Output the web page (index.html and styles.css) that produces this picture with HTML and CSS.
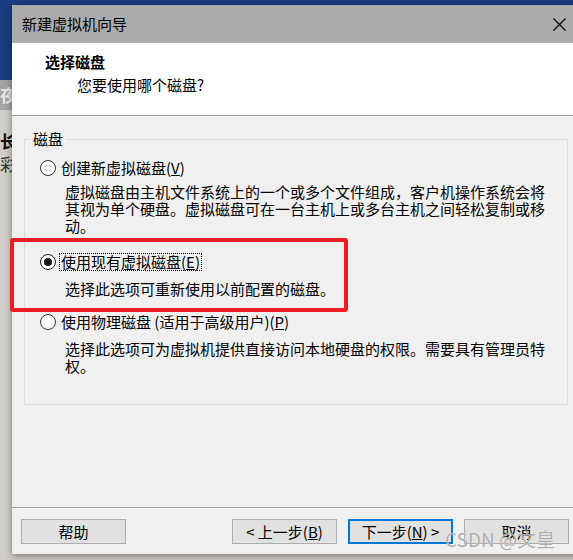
FILE: index.html
```html
<!DOCTYPE html>
<html lang="zh-CN">
<head>
<meta charset="utf-8">
<title>新建虚拟机向导</title>
<link rel="stylesheet" href="styles.css">
</head>
<body>
<div class="desktop">
  <div class="backwin">
    <div class="backwin-bar">夜</div>
    <p class="bw-strong">长</p>
    <p class="bw-text">彩</p>
  </div>
  <div class="dialog">
    <div class="titlebar">
      <span class="title">新建虚拟机向导</span>
      <svg class="close" width="13" height="13" viewBox="0 0 13 13"><path d="M0.5 0.5 L12.5 12.5 M12.5 0.5 L0.5 12.5" stroke="#000" stroke-width="1.1" fill="none"/></svg>
    </div>
    <div class="header">
      <div class="h-title">选择磁盘</div>
      <div class="h-sub">您要使用哪个磁盘?</div>
    </div>
    <div class="content">
      <fieldset class="group">
        <legend>磁盘</legend>
        <div class="option option-first">
          <div class="opt-row"><span class="radio"></span><span class="label">创建新虚拟磁盘(<u>V</u>)</span></div>
          <p class="desc desc-first">虚拟磁盘由主机文件系统上的一个或多个文件组成，客户机操作系统会将其视为单个硬盘。虚拟磁盘可在一台主机上或多台主机之间轻松复制或移动。</p>
        </div>
        <div class="option option-second">
          <div class="opt-row"><span class="radio radio-on"></span><span class="label label-focus">使用现有虚拟磁盘(<u>E</u>)</span></div>
          <p class="desc">选择此选项可重新使用以前配置的磁盘。</p>
        </div>
        <div class="option option-third">
          <div class="opt-row"><span class="radio"></span><span class="label">使用物理磁盘 (适用于高级用户)(<u>P</u>)</span></div>
          <p class="desc">选择此选项可为虚拟机提供直接访问本地硬盘的权限。需要具有管理员特权。</p>
        </div>
      </fieldset>
    </div>
    <div class="footer">
      <button class="btn">帮助</button>
      <div class="spacer"></div>
      <button class="btn">&lt; 上一步(<u>B</u>)</button>
      <button class="btn btn-default">下一步(<u>N</u>) &gt;</button>
      <button class="btn">取消</button>
    </div>
  </div>
  <div class="highlight"></div>
  <div class="watermark">CSDN @文皇</div>
</div>
</body>
</html>
```
FILE: styles.css
```css
* { box-sizing: border-box; }
html, body { margin: 0; padding: 0; }
body {
  width: 573px;
  height: 560px;
  overflow: hidden;
  background: #1b3d82;
  font-family: "Noto Sans CJK SC", "Microsoft YaHei", sans-serif;
  font-size: 15px;
  line-height: 18px;
  color: #000;
}
.desktop {
  position: relative;
  width: 573px;
  height: 560px;
  padding: 5px 0 0 12px;
  overflow: hidden;
}
.backwin {
  position: absolute;
  left: 0;
  top: 80px;
  width: 573px;
  height: 480px;
  background: #d2cec9;
}
.backwin-bar {
  height: 30px;
  background: #a4a4a4;
  color: #e8e8e8;
  font-weight: 700;
  font-size: 17px;
  line-height: 30px;
}
.backwin p { margin: 0; font-size: 17px; }
.bw-strong { margin-top: 21px !important; font-weight: 700; line-height: 20px; color: #111; }
.bw-text { line-height: 26px; color: #333; }

.dialog {
  position: relative;
  z-index: 1;
  width: 568px;
  height: 549px;
  display: flex;
  flex-direction: column;
  background: #f0f0f0;
  box-shadow: 0 2px 7px rgba(0, 0, 0, 0.45);
}
.titlebar {
  height: 38px;
  flex: none;
  background: #ababab;
  display: flex;
  align-items: center;
  justify-content: space-between;
  padding: 0 14px 0 10px;
}
.title { color: #000; }
.close { display: block; }
.header {
  height: 73px;
  flex: none;
  background: #fff;
  border-bottom: 1px solid #a0a0a0;
  padding: 10px 0 0 33px;
}
.h-title { font-weight: 700; }
.h-sub { margin: 5px 0 0 32px; }

.content {
  flex: 1;
  padding: 14px 12px 0;
}
.group {
  margin: 0;
  padding: 0 0 30px 5px;
  border: 1px solid #dcdcdc;
  min-width: 0;
}
.group legend {
  padding: 0 3px;
  line-height: 18px;
}
.option-first { margin-top: 11px; }
.option-second { margin-top: 19px; }
.option-third { margin-top: 16px; }
.opt-row {
  display: flex;
  align-items: center;
  height: 18px;
}
.radio {
  flex: none;
  position: relative;
  width: 16px;
  height: 16px;
  margin-left: 10px;
  border: 1px solid #333;
  border-radius: 50%;
  background: #fff;
}
.radio-on { border-color: #1a1a1a; border-width: 1.5px; }
.radio-on::after {
  content: "";
  position: absolute;
  left: 2.5px;
  top: 2.5px;
  width: 8px;
  height: 8px;
  border-radius: 50%;
  background: #1a1a1a;
}
.label {
  margin-left: 3px;
  padding: 0 1px;
  line-height: 16px;
  border: 1px dotted transparent;
}
.label-focus { border-color: #000; }
.desc {
  margin: 9px 0 0 35px;
  max-width: 482px;
  line-height: 17px;
}
.desc-first { margin-top: 6px; }

.footer {
  flex: none;
  height: 47px;
  border-top: 1px solid #a0a0a0;
  box-shadow: inset 0 1px #fff;
  display: flex;
  align-items: flex-start;
  gap: 11px;
  padding: 11px 11px 0 9px;
}
.spacer { flex: 1; }
.btn {
  width: 105px;
  height: 25px;
  padding: 0;
  border: 1px solid #adadad;
  background: #e1e1e1;
  font-family: inherit;
  font-size: 15px;
  line-height: 18px;
  color: #000;
}
.btn-default { border: 2px solid #0078d7; }

.highlight {
  position: absolute;
  z-index: 2;
  left: 10px;
  top: 238px;
  width: 338px;
  height: 74px;
  border: 4px solid #ec1c24;
  border-radius: 3px;
}
.watermark {
  position: absolute;
  z-index: 3;
  left: 445px;
  top: 526px;
  font-size: 19px;
  line-height: 26px;
  color: rgba(140, 140, 140, 0.7);
  text-shadow: 0 0 1px #fff;
}
```
